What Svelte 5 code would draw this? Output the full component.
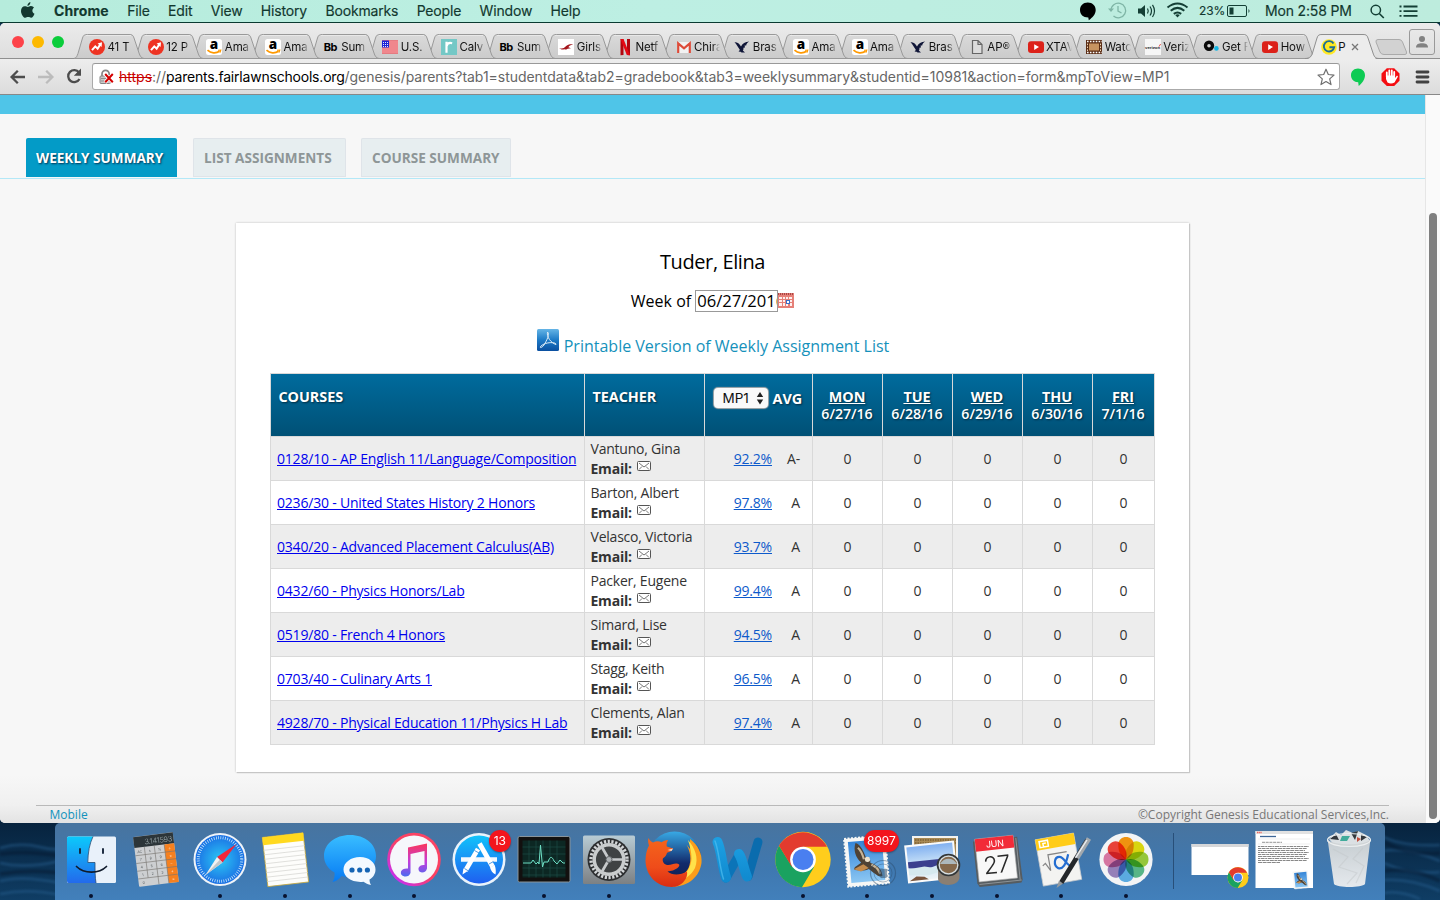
<script>
  const menus = ['File', 'Edit', 'View', 'History', 'Bookmarks', 'People', 'Window', 'Help'];

  const tabs = [
    ['trend', '41 T'], ['trend', '12 P'], ['amazon', 'Ama'], ['amazon', 'Ama'], ['bb', 'Sum'],
    ['flag', 'U.S.'], ['calv', 'Calv'], ['bb', 'Sum'], ['girls', 'Girls'], ['netflix', 'Netf'],
    ['gmail', 'Chira'], ['eagle', 'Bras'], ['amazon', 'Ama'], ['amazon', 'Ama'], ['eagle', 'Bras'],
    ['page', 'AP®'], ['youtube', 'XTAV'], ['film', 'Watc'], ['verizon', 'Veriz'], ['disc', 'Get F'],
    ['youtube', 'How'], ['genesis', 'P']
  ];

  const sections = ['Weekly Summary', 'List Assignments', 'Course Summary'];

  const days = [
    ['MON', '6/27/16'], ['TUE', '6/28/16'], ['WED', '6/29/16'], ['THU', '6/30/16'], ['FRI', '7/1/16']
  ];

  const rows = [
    ['0128/10 - AP English 11/Language/Composition', 'Vantuno, Gina', '92.2%', 'A-'],
    ['0236/30 - United States History 2 Honors', 'Barton, Albert', '97.8%', 'A'],
    ['0340/20 - Advanced Placement Calculus(AB)', 'Velasco, Victoria', '93.7%', 'A'],
    ['0432/60 - Physics Honors/Lab', 'Packer, Eugene', '99.4%', 'A'],
    ['0519/80 - French 4 Honors', 'Simard, Lise', '94.5%', 'A'],
    ['0703/40 - Culinary Arts 1', 'Stagg, Keith', '96.5%', 'A'],
    ['4928/70 - Physical Education 11/Physics H Lab', 'Clements, Alan', '97.4%', 'A']
  ];

  const dock = [
    ['finder', true], ['calculator', false], ['safari', true], ['notes', true], ['messages', true],
    ['itunes', true], ['appstore', false], ['activity', true], ['settings', true], ['firefox', false],
    ['word', false], ['chrome', true], ['mail', true], ['preview', true], ['calendar', true],
    ['grapher', true], ['photos', true]
  ];

  const range = (n) => Array.from({ length: n }, (_, i) => i);
  const petals = ['#fb9a10', '#e3df10', '#9ccf3c', '#5bbd8b', '#5fb2ea', '#9c86c0', '#e07ba8', '#f4453a'];
</script>

{#snippet favicon(kind)}
  <svg class="favicon" viewBox="0 0 16 16" width="16" height="16">
    {#if kind === 'trend'}
      <circle cx="8" cy="8" r="8" fill="#ee3322" />
      <path d="M3 11.2 6.3 7.4 8.6 9.6 11.2 5.6" fill="none" stroke="#fff" stroke-width="2" />
      <path d="M8.6 4.6 13 3.2 12.6 8Z" fill="#fff" />
    {:else if kind === 'amazon'}
      <rect width="16" height="16" rx="2.5" fill="#fff" />
      <text x="8" y="9.6" text-anchor="middle" font-family="Open Sans, sans-serif" font-weight="800" font-size="13.5" fill="#000">a</text>
      <path d="M1.5 11.2C5 14.4 10 14.6 13.6 12.2" fill="none" stroke="#f90" stroke-width="1.7" />
      <path d="M12 11.2 14.8 11 14 13.6" fill="none" stroke="#f90" stroke-width="1.1" />
    {:else if kind === 'flag'}
      <rect y="1.5" width="16" height="13" fill="#fff" />
      {#each range(7) as i}<rect y={1.5 + i * 2} width="16" height="1" fill="#e2101c" />{/each}
      <rect y="1.5" width="7" height="7" fill="#1a22d8" />
      <path d="M1 3.5H7M1 5.5H7M1 7.5H7" stroke="#fff" stroke-width=".9" stroke-dasharray="1 1" />
    {:else if kind === 'calv'}
      <rect width="16" height="16" fill="#74c8c6" />
      <path d="M5.500 2.800V13.800M5.500 7.200C6.200 4.600 8 3.400 11.200 4.200" fill="none" stroke="#fff" stroke-width="2.2" />
    {:else if kind === 'girls'}
      <rect width="16" height="16" fill="#fff" />
      <path d="M1 9C4 10.2 6 9.4 7.6 7.6 9.400 5.600 12 5.2 15 5.4 12.500 6 11 6.8 10.400 8.2L13 9.2 9.6 9.8C8.600 11 7.400 10.4 6.400 10.2 4 11 2.400 10.2 1 9Z" fill="#a4161c" />
    {:else if kind === 'netflix'}
      <path d="M3.5 0H6.5V16L3.5 16.2ZM10 0H13V16.2L10 16Z" fill="#b1060f" />
      <path d="M3.5 0H6.5L13 16.2 9.8 16Z" fill="#e50914" />
    {:else if kind === 'gmail'}
      <rect x="1" y="3" width="14" height="11" rx="1" fill="#f2f2f2" />
      <path d="M2.2 14V4.4L8 9.4 13.8 4.4V14" fill="none" stroke="#dd4b39" stroke-width="2.2" />
    {:else if kind === 'eagle'}
      <path d="M.5 3.2C3 3 5.6 4.4 7 7.6 8.4 4.8 11 2.8 15.4 2.6 13.4 3.6 12.4 5 12.2 6.4L10.6 6.6 11 8.4 9.4 8.8C9.6 10.4 9.4 11 8.8 11.6L11 13.4 7.6 13.6 6 12.6 4.6 13 5.8 10.8C4 8 2.4 5 .5 3.2Z" fill="#101638" />
    {:else if kind === 'page'}
      <path d="M3.5 1.5H9L13 5.5V14.5H3.5ZM9 1.5V5.5H13" fill="#dcdcdc" stroke="#666" stroke-width="1.2" />
    {:else if kind === 'youtube'}
      <rect y="2.3" width="16" height="11.6" rx="3" fill="#dc2119" />
      <path d="M6.2 5.3 11 8.1 6.2 10.9Z" fill="#fff" />
    {:else if kind === 'film'}
      <rect y="1" width="16" height="14" fill="#5a2c14" />
      <rect x="3" y="4.5" width="10" height="7" fill="#c79360" />
      <path d="M1 2.6H16M1 13.4H16" stroke="#fff" stroke-width="1.5" stroke-dasharray="1.6 1.3" />
      <path d="M1.5 4.6V12M14.5 4.6V12" stroke="#f0d6b6" stroke-width="1" stroke-dasharray="1.6 1.3" />
    {:else if kind === 'verizon'}
      <rect width="16" height="16" fill="#f6f6f6" />
      <text x="0" y="10" font-family="Liberation Sans, sans-serif" font-weight="700" font-size="4.3" fill="#222">verizon</text>
      <path d="M14 7.6 15.6 5" stroke="#e2231a" stroke-width=".8" />
    {:else if kind === 'disc'}
      <circle cx="6" cy="6.7" r="3.5" fill="none" stroke="#0a0a0a" stroke-width="3.4" />
      <circle cx="13.4" cy="9.4" r="2.3" fill="#16b7e4" />
    {:else if kind === 'genesis'}
      <circle cx="8" cy="8" r="7.8" fill="#ffe823" />
      <path d="M12.5 4.6A5.200 5.200 0 1 0 13.200 8.2H8.4" fill="none" stroke="#1f6e93" stroke-width="1.900" />
    {/if}
  </svg>
{/snippet}

{#snippet chromeLogo(cx, cy, r)}
  <g transform="translate({cx} {cy}) scale({r / 28})">
    <circle r="28" fill="#ffcd1c" />
    <path d="M-24.2 -14A28 28 0 0 0 -1 28L11.5 7 0 13-11.5 6.5Z" fill="#1aa260" />
    <path d="M-24.2 -14A28 28 0 0 1 24.2 -13L0 -13-11.5 7Z" fill="#e33b2e" />
    <circle r="13" fill="#fff" />
    <circle r="10.6" fill="#4a7ff0" />
  </g>
{/snippet}

{#snippet stamp()}
  <g transform="rotate(-5 32 37)">
    <rect x="11" y="14" width="41" height="48" fill="#f7f7f5" stroke="#f7f7f5" stroke-width="2" stroke-dasharray="2 1.5" />
    <rect x="14.5" y="17.5" width="34" height="41" fill="url(#sky)" />
    <path d="M22 19C26 20 29 26 31 34 34 34 36 37 35 40 40 42 46 46 46 54 42 56 38 50 33 46 29 48 24 47 19 46 17 43 22 42 26 39 21 34 19 26 22 19Z" fill="#4f4234" />
    <path d="M24 24C27 27 28 31 29 36M36 42C40 44 43 48 44 52" stroke="#c8b596" stroke-width="2.2" fill="none" />
    <path d="M18 45 28 41 33 45 25 48Z" fill="#c48b4c" />
    <circle cx="32.5" cy="36.5" r="2.6" fill="#eee3cd" />
  </g>
{/snippet}

{#snippet dockIcon(kind)}
  <svg class="dock-icon" viewBox="0 0 64 77" width="64" height="77">
    {#if kind === 'finder'}
      <rect x="8" y="13.5" width="49" height="46.5" rx="1.5" fill="#e9f1fa" />
      <path d="M9.5 13.5H34C30.5 21 29 29 28.8 39.5H36C36 47 36 54 37 60H9.5Q8 60 8 58V15Q8 13.5 9.5 13.5Z" fill="url(#finderBlue)" />
      <path d="M34 13.5C30.5 21 29 29 28.800 39.500H36C36 47 36 54 37 60" fill="none" stroke="#274b74" stroke-width=".8" />
      <path d="M21 26V30M44 26V30" stroke="#16243a" stroke-width="1.9" stroke-linecap="round" />
      <path d="M17.5 43.5C25 51 40 51 47.5 43.5" fill="none" stroke="#101b2c" stroke-width="1.7" stroke-linecap="round" />
    {:else if kind === 'calculator'}
      <g transform="rotate(-7 32 37)">
        <rect x="12" y="11.5" width="40" height="50" rx="1" fill="#cdcfd1" />
        <rect x="12" y="11.5" width="40" height="11" fill="#2c3539" />
        <text x="50.5" y="20.3" text-anchor="end" font-family="Inter, sans-serif" font-weight="300" font-size="7.600" letter-spacing="-.3" fill="#98a5a8">3.141593</text>
        <rect x="42" y="22.5" width="10" height="39" fill="#f5801f" />
        <path d="M12 30.300H52M12 38.100H52M12 45.900H52M12 53.700H52M22 22.500V53.700M32 22.500V61.500M42 22.500V61.500" stroke="#77746f" stroke-width=".6" />
        <g font-family="Inter, sans-serif" font-size="3.600" fill="#5b6064" text-anchor="middle">
          {#each ['AC', '±', '%', '7', '8', '9', '4', '5', '6', '1', '2', '3', '0'] as key, i}
            <text x={17 + (i % 3) * 10} y={28 + Math.floor(i / 3) * 7.8}>{key}</text>
          {/each}
        </g>
        <g font-family="Inter, sans-serif" font-size="4" fill="#ffe3c8" text-anchor="middle">
          {#each ['÷', '×', '−', '+', '='] as key, i}<text x="47" y={28 + i * 7.8}>{key}</text>{/each}
        </g>
      </g>
    {:else if kind === 'safari'}
      <circle cx="32" cy="36.5" r="26.5" fill="#f0f4f8" />
      <circle cx="32" cy="36.5" r="24.5" fill="url(#safariBlue)" />
      <circle cx="32" cy="36.5" r="21.8" fill="none" stroke="#d9f0ff" stroke-width="3" stroke-dasharray=".7 1.58" />
      <path d="M48.5 21 34.5 39.5 29 34Z" fill="#f3263a" />
      <path d="M17.5 52 29 34 34.5 39.5Z" fill="#f2f2f2" />
      <path d="M17.5 52 31.8 36.8 34.5 39.5Z" fill="#c3c7ca" />
    {:else if kind === 'notes'}
      <g transform="rotate(-6.5 32 37)">
        <rect x="12" y="12" width="41" height="49.5" fill="#fdfdfb" stroke="#c8a93c" stroke-width=".8" />
        <path d="M12 25H53M12 29.5H53M12 34H53M12 38.5H53M12 43H53M12 47.5H53M12 52H53M12 56.5H53" stroke="#dadad6" stroke-width=".8" />
        <rect x="12" y="12" width="41" height="8" fill="#ffd91f" />
      </g>
    {:else if kind === 'messages'}
      <path d="M32 12C47 12 58 21 58 33S47 54 32 54C29 54 26 53.6 23.5 53 21 56 18 58.5 14.5 59 16 56.5 17 53 16.5 49.5 10 46 6 40 6 33 6 21 17 12 32 12Z" fill="url(#msgBlue)" />
      <path d="M42 34C51 34 57.5 39.5 57.5 46.5 57.5 51 55 54.5 51.5 56.5 51.5 58.5 52 60.5 53 62 50 61.5 47.5 60 45.5 58.7 34 60 25.5 54 25.5 46.5 25.5 39.5 33 34 42 34Z" fill="#f3f9ff" />
      <circle cx="34" cy="47" r="2.6" fill="#1464b4" /><circle cx="41.7" cy="47" r="2.6" fill="#1464b4" /><circle cx="49.4" cy="47" r="2.6" fill="#1464b4" />
    {:else if kind === 'itunes'}
      <circle cx="32" cy="36.5" r="26.8" fill="url(#tunes)" />
      <circle cx="32" cy="36.5" r="24" fill="#f6f7fb" />
      <path d="M26 24.5 45 20.5V45.5Q44 49.5 40 49.5 36 49 36.5 45 38 41.5 42.5 42V28L28.5 31V50Q27 54 22.5 53.5 18 52.5 19 48.500 20.500 45 26 45.500Z" fill="url(#note)" />
    {:else if kind === 'appstore'}
      <circle cx="32" cy="36.5" r="26.5" fill="#eaf3fb" />
      <circle cx="32" cy="36.5" r="24" fill="url(#storeBlue)" />
      <path d="M14 36.5H50" stroke="#f3f8fd" stroke-width="4.5" />
      <path d="M31 26 18.5 47.5" stroke="#fff" stroke-width="4.6" />
      <path d="M32.5 20.5 45.5 43.5" stroke="#fff" stroke-width="4.8" />
      <path d="M16.4 45.5 20.7 48 15.5 51.5ZM43 44.5 47.7 42C49 46 49 49 48.5 51.5 45.5 50 44 48 43 44.5Z" fill="#fff" />
      <path d="M27.5 27.5 32 30M42 41 46.5 38.5M17.5 45.5 21.5 48" stroke="#2a82d8" stroke-width=".8" />
    {:else if kind === 'activity'}
      <rect x="6" y="13.5" width="52" height="45.5" rx="1.5" fill="#12100f" stroke="#8a949a" stroke-width="1" />
      <rect x="10.5" y="17.5" width="43" height="37" fill="#0c2723" />
      <path d="M17 17.5V54.5M24 17.5V54.5M31 17.5V54.5M38 17.5V54.5M45 17.5V54.5M10.5 24H53.5M10.5 31H53.5M10.5 38H53.5M10.5 45H53.5M10.5 52H53.5" stroke="#1f5249" stroke-width=".6" />
      <path d="M11 40H19L21 37 24 41 26 39 27 41 28.5 22 30.5 44 32 39H36C38 33 40 33 42 38L45 41 48 37 51 40H53" fill="none" stroke="#6ee0c5" stroke-width="1" />
    {:else if kind === 'settings'}
      <rect x="6" y="12.5" width="52" height="48.5" rx="1.5" fill="url(#steel)" />
      <circle cx="32" cy="36.5" r="21.500" fill="#2d2f31" />
      <circle cx="32" cy="36.5" r="18" fill="none" stroke="#d2d5d7" stroke-width="3.4" stroke-dasharray="2.2 1.57" />
      <circle cx="32" cy="36.5" r="14.800" fill="#3f4244" stroke="#c9cccd" stroke-width="3.5" />
      <path d="M32 36.5 24.500 23.500M32 36.5H47M32 36.5 24.500 49.500" stroke="#c6c9cb" stroke-width="2.700" />
      <circle cx="32" cy="36.5" r="3" fill="#aeb2b5" stroke="#5e6265" />
    {:else if kind === 'firefox'}
      <circle cx="33.5" cy="35" r="26.5" fill="url(#foxBlue)" />
      <path d="M49 16C57 22 61.500 31 60.500 40 58.500 54 47 63.500 33 63.500 22 63.500 15 59 12 53 26 58 42 56 47.500 45 51 36 49 28 45.500 21.500L49 26Z" fill="#fb9d1b" />
      <path d="M47 17C54 25 58 35 54 45 50 53 43 57 36 58 44 53 50 45 50.500 36 50.500 29 49 23 47 17Z" fill="#ffe24a" />
      <path d="M7.500 15C8.500 17 10 18.500 12 19.500 15 18 18 18 20.500 19.300 22 18 24.500 17 27 17 25.800 19.300 25.200 21.500 25.800 23.500L32 25.500C31.500 28 28.500 28.800 26 29.800 25.500 32 24.500 33.500 22 35.200 21 38 22.500 41 26 42 30 42.600 32 40.200 36 40.600 38.500 41 39 42.500 37.500 44 34 47.500 30 48 26.500 48.500 31 52.500 39 52.500 46 48.500 47 54 43 61.500 34 63.800 17 65.500 5 53.500 4.500 38 4.500 31 6 26 8 22.500 7 20 6.800 17 7.500 15Z" fill="url(#foxFire)" />
      <path d="M26.5 27 32 25.500 30.500 28Z" fill="#f7dfc8" />
    {:else if kind === 'word'}
      <g fill="none" stroke-linecap="round">
        <path d="M42 53.500 52 19" stroke="#0a6cae" stroke-width="9" />
        <path d="M20 55 33.500 31" stroke="#0b74b8" stroke-width="9" />
        <path d="M11.5 19C15.500 28 16 43 20 54.500M33 31C37 37 37.500 46 41 53.500" stroke="url(#wordBlue)" stroke-width="10" />
        <path d="M9 18C13 28 13.500 44 17.500 56" stroke="#4fbdf0" stroke-width="1.500" opacity=".7" />
      </g>
    {:else if kind === 'chrome'}
      {@render chromeLogo(32, 36.5, 27.7)}
    {:else if kind === 'mail'}
      {@render stamp()}
      <circle cx="48" cy="50" r="12.5" fill="none" stroke="#2b4a68" stroke-width="1.2" opacity=".45" />
      <circle cx="48" cy="50" r="9" fill="none" stroke="#2b4a68" stroke-width=".8" opacity=".45" />
      <path d="M44 46C47 45 48 46 49 46 52 45 53 47 53 47 51 49 52 52 53 53 51 56 49 55 48 55 45 56 43 52 44 46Z" fill="#2b4a68" opacity=".55" />
    {:else if kind === 'preview'}
      <rect x="13" y="14" width="44" height="33" fill="#a98a55" stroke="#f3f3f0" stroke-width="2" />
      <path d="M15 17H56M15 20H56" stroke="#7d6134" stroke-width="1.5" stroke-dasharray="1.5 1" />
      <g transform="rotate(-6 30 39)">
        <rect x="7" y="21" width="48" height="36" fill="url(#beach)" stroke="#fafafa" stroke-width="2" />
        <path d="M8 37H54V43L40 42 25 46 8 43Z" fill="#3b3f8e" />
        <path d="M8 44 24 43 36 46 54 43V50L42 49 27 52 8 50Z" fill="#d6e9ee" />
        <path d="M8 56 15 52 23 53 27 56Z" fill="#79543b" />
      </g>
      <path d="M38 42V56C39 64 58 64 59.500 55V40Z" fill="#8b7f72" />
      <ellipse cx="48.5" cy="42" rx="11" ry="10.5" fill="#6e746f" stroke="#343739" stroke-width="1.6" />
      <ellipse cx="48.5" cy="42" rx="9.3" ry="8.8" fill="#85694c" stroke="#d8dfe2" stroke-width="1.2" />
      <path d="M40 41C44 34 53 34 57 41Z" fill="#b4c7d0" opacity=".85" />
    {:else if kind === 'calendar'}
      <g transform="rotate(-6 32 37)">
        <path d="M10 16H54.500L55.500 59 54 62H12L10 58Z" fill="#565c60" />
        <path d="M12 59.500H54.500M53 17V59" stroke="#979da1" stroke-width=".8" />
        <rect x="12" y="14" width="38.500" height="43" fill="#f8f8f8" stroke="#aaa" stroke-width=".6" />
        <rect x="12" y="14" width="38.500" height="12.500" fill="#f22b38" />
        <text x="31.5" y="23.800" text-anchor="middle" font-family="Inter, sans-serif" font-size="9" letter-spacing="-.3" fill="#fff">JUN</text>
        <text x="31" y="50" text-anchor="middle" font-family="Inter, sans-serif" font-weight="300" font-size="24" letter-spacing="-.8" fill="#292929">27</text>
      </g>
    {:else if kind === 'grapher'}
      <g transform="rotate(-10 30 37)">
        <rect x="10" y="13" width="39" height="47" fill="#f3f3f1" stroke="#ccc" stroke-width=".7" />
        <rect x="10" y="13" width="39" height="11" fill="#ffcc18" />
        <path d="M13.5 15.5H22V21.5H13.5ZM17 21.5V18H20" fill="none" stroke="#fff" stroke-width="1.5" />
        <path d="M13 40 16 38 20 46V30H39" fill="none" stroke="#858585" stroke-width="1.2" />
        <path d="M40 33C36 43 32 47 28 45 23 41 26 33 31 34 36 35 36 44 42 46" fill="none" stroke="#236dd1" stroke-width="2.2" />
      </g>
      <path d="M58.5 17 32 60" stroke="#24272a" stroke-width="4.800" />
      <path d="M60 15.500 48 35" stroke="#a3a9ae" stroke-width="4.800" />
      <path d="M58 17 46.500 35" stroke="#f1f3f4" stroke-width="1.3" />
      <path d="M30 57.500 34 60.5 27.500 65Z" fill="#959a9e" />
    {:else if kind === 'photos'}
      <circle cx="32" cy="36.5" r="26.6" fill="#f3f4f5" />
      <g class="petals">
        {#each petals as color, i}
          <path d="M32 36.5C24.500 32 24.300 26 24.300 21.500 24.300 11.500 39.700 11.500 39.700 21.500 39.700 26 39.500 32 32 36.5Z" fill={color} transform="rotate({i * 45} 32 36.5)" />
        {/each}
      </g>
    {:else if kind === 'window'}
      <rect x="3.5" y="21" width="57" height="31" fill="#fff" />
      <rect x="3.5" y="21" width="57" height="3" fill="#d6d7d9" />
      {@render chromeLogo(50, 54.5, 10.5)}
    {:else if kind === 'letter'}
      <rect x="3.5" y="8" width="57.5" height="57" fill="#fff" />
      <rect x="3.5" y="8" width="57.5" height="3" fill="#e2e2e2" />
      <path d="M5 9.5H10" stroke="#f06058" stroke-width="1.5" stroke-dasharray="1.2 .5" />
      <path d="M8 13.5H24" stroke="#3e6797" stroke-width="1.3" />
      <path d="M6 16H58M6 21H58" stroke="#ddd" stroke-width=".5" />
      <path d="M10 19.3H30" stroke="#888" stroke-width=".9" stroke-dasharray="3 .7" />
      {#each range(9) as i}
        <path d="M6 {23.5 + i * 2}H{i === 8 ? 28 : 57 - (i % 3) * 2}" stroke="#888" stroke-width="1" stroke-dasharray="{2 + (i % 3)} .6 4 .6" />
      {/each}
      <g transform="translate(37.5 43) scale(.36)">{@render stamp()}</g>
    {:else if kind === 'trash'}
      <path d="M12 16 19 9 24 12 29 7 36 10 41 8 49 12 53 18 45 23H18Z" fill="#dbe0e3" />
      <path d="M13 16 19 11 22 17ZM34 10 41 8 38 17ZM44 11 50 14 44 18Z" fill="#33383d" />
      <path d="M25 13H33L30 18H23Z" fill="#42ac9b" />
      <path d="M40 14 44 16 40 19Z" fill="#c34d3c" />
      <path d="M10.5 16 17 61C20 65 45 65 48 61L53.5 16C50 23 14 23 10.5 16Z" fill="url(#bin)" opacity=".95" />
      <path d="M16 26 31 34 22 44 40 50 30 61M46 25 36 36 47 43 39 60" stroke="#c2c6c8" stroke-width="1.2" fill="none" opacity=".45" />
      <ellipse cx="32" cy="17" rx="21.5" ry="6.5" fill="none" stroke="#eceff0" stroke-width="1.2" />
    {/if}
  </svg>
{/snippet}

<svg class="defs" width="0" height="0" aria-hidden="true">
  <defs>
    <linearGradient id="tabFill" x2="0" y2="1"><stop stop-color="#dadada" /><stop offset="1" stop-color="#cbcbcb" /></linearGradient>
    <linearGradient id="finderBlue" x2="0" y2="1"><stop stop-color="#0cc9fb" /><stop offset="1" stop-color="#236aec" /></linearGradient>
    <radialGradient id="safariBlue"><stop stop-color="#2bc8f5" /><stop offset="1" stop-color="#1b70e4" /></radialGradient>
    <linearGradient id="msgBlue" x2="0" y2="1"><stop stop-color="#39bdff" /><stop offset="1" stop-color="#067af4" /></linearGradient>
    <linearGradient id="tunes" x1="1" x2="0" y1="0" y2="1"><stop offset=".1" stop-color="#fb4566" /><stop offset=".5" stop-color="#fb3f61" /><stop offset=".85" stop-color="#c931e8" /><stop offset="1" stop-color="#a04cf8" /></linearGradient>
    <linearGradient id="note" x2="0" y2="1"><stop stop-color="#fa3659" /><stop offset=".55" stop-color="#c43cdb" /><stop offset="1" stop-color="#4b6cf1" /></linearGradient>
    <linearGradient id="storeBlue" x2="0" y2="1"><stop stop-color="#12c3fa" /><stop offset="1" stop-color="#1f5ff0" /></linearGradient>
    <linearGradient id="steel" x2="0" y2="1"><stop stop-color="#b8cbd4" /><stop offset="1" stop-color="#7c8083" /></linearGradient>
    <linearGradient id="foxBlue" x2="0" y2="1"><stop stop-color="#38a9e5" /><stop offset=".6" stop-color="#122a6b" /><stop offset="1" stop-color="#101d4e" /></linearGradient>
    <linearGradient id="foxFire" x2="0" y2="1"><stop stop-color="#f4651c" /><stop offset=".6" stop-color="#ef4c1a" /><stop offset="1" stop-color="#d92c12" /></linearGradient>
    <linearGradient id="wordBlue" x2="0" y2="1"><stop stop-color="#1c9fe2" /><stop offset="1" stop-color="#118bd0" /></linearGradient>
    <linearGradient id="sky" x2="0" y2="1"><stop stop-color="#3585d7" /><stop offset="1" stop-color="#8cc7f3" /></linearGradient>
    <linearGradient id="beach" x2="0" y2="1"><stop stop-color="#7eaef0" /><stop offset=".5" stop-color="#c6e0f7" /><stop offset="1" stop-color="#f0f5f6" /></linearGradient>
    <linearGradient id="bin" x2="0" y2="1"><stop stop-color="#ccd1d3" /><stop offset="1" stop-color="#eeeff0" /></linearGradient>
    <linearGradient id="pdf" x2="0" y2="1"><stop stop-color="#65b5e6" /><stop offset=".5" stop-color="#1d7ac6" /><stop offset="1" stop-color="#0a4fa0" /></linearGradient>
  </defs>
</svg>

<div class="desktop">
  <header class="menubar">
    <svg class="apple" viewBox="0 0 14 17" width="14" height="17"><path d="M9.400 0C9.500 2 8 3.800 6.500 3.900 6.300 2.200 7.800.300 9.400 0ZM6.900 4.900C7.600 4.900 8.600 4 10 4.100 11.300 4.200 12.300 4.700 13 5.700 10.600 7.100 11 10.700 13.500 11.700 12.800 13.500 11.500 15.800 10.100 15.800 9 15.800 8.600 15.100 7.200 15.100 5.800 15.100 5.400 15.800 4.300 15.800 2.300 15.800 0 12 0 9 0 6 1.800 4.300 3.700 4.300 5.100 4.300 6 4.900 6.900 4.900Z" fill="#12382f" /></svg>
    <nav><b>Chrome</b>{#each menus as m}<span>{m}</span>{/each}</nav>
    <div class="status">
      <svg viewBox="0 0 285 22" width="285" height="22" fill="none" stroke="#143f35">
        <path d="M9.800 2.500C14.500 2.500 17.700 5.800 17.700 10 17.700 14.500 14.500 17.500 10.800 20.200L10.300 17.500C5 17.500 2 14.500 2 10 2 5.800 5 2.500 9.800 2.500Z" fill="#000" stroke="none" />
        <g stroke="#7fb5a6" stroke-width="1.300"><path d="M33 10.500A7.300 7.300 0 1 1 35.500 16" /><path d="M40 6V11L43.500 13" /></g>
        <path d="M30 8.500H36L33 12Z" fill="#7fb5a6" stroke="none" />
        <path d="M60 8.500H63L67 5V17L63 13.500H60Z" fill="#143f35" stroke="none" />
        <path d="M69.500 8.500Q71 11 69.500 13.500M72 6.500Q75 11 72 15.500M74.500 4.800Q78.500 11 74.500 17" stroke-width="1.200" />
        <g stroke-width="2"><path d="M89.500 7.500Q99.500 -.500 109.500 7.500M92.700 10.800Q99.500 5 106.300 10.800M95.800 13.900Q99.500 11 103.200 13.900" /></g>
        <path d="M97.200 15Q99.500 13.500 101.800 15L99.500 17.600Z" fill="#143f35" stroke="none" />
        <rect x="149.500" y="5.500" width="19" height="11" rx="1.500" />
        <rect x="151.500" y="7.500" width="4" height="7" fill="#143f35" stroke="none" />
        <path d="M170.500 9Q172.500 11 170.500 13Z" fill="#143f35" stroke="none" />
      </svg>
      <span class="battery">23%</span>
      <span class="clock">Mon 2:58 PM</span>
      <svg class="tools" viewBox="0 0 50 22" width="50" height="22" fill="none" stroke="#143f35"><circle cx="5.800" cy="10" r="4.700" stroke-width="1.500" /><path d="M9.300 13.500 13.800 18" stroke-width="1.700" /><path d="M33.500 6.500H47.500M33.500 11.200H47.500M33.500 15.800H47.500" stroke-width="1.800" /><path d="M29.500 6.500H31.500M29.500 11.200H31.500M29.500 15.800H31.500" stroke-width="1.800" /></svg>
    </div>
  </header>

  <main class="window">
    <div class="tabstrip">
      <div class="lights"><i></i><i></i><i></i></div>
      <div class="tabs">
        {#each tabs as [icon, title], i}
          <div class="tab" class:active={i === 21} style:z-index={i === 21 ? 40 : 30 - i}>
            <svg class="shape" viewBox="0 0 74 26" width="74" height="26">
              {#if i === 21}
                <path d="M-2 25.500C3 25 4.500 23 5.500 20L10 4C11 1 12 .500 15 .500H56C59 .500 60 1 61 4L66 20C67 23 68 25.500 72 25.500V26H-2Z" fill="#ececec" />
                <path d="M-2 24.500C3 24.500 4.500 22 5.500 19L10 4C11 1 12 .500 15 .500H56C59 .500 60 1 61 4L66 19C67 22 68 24.500 72 24.500" fill="none" stroke="#8f8f8f" />
              {:else}
                <path d="M-1 24.500C1.500 24 2 22 3 19.500L7.500 4C8.500 1 9.500 .500 12.500 .500H54C57 .500 58 1 59 4L64 19C65 22 66 24 69 24.500Z" fill="url(#tabFill)" stroke="#999" />
                <path d="M11 1.500H56" stroke="#e8e8e8" />
              {/if}
            </svg>
            {#if icon === 'bb'}<b class="bb">Bb</b>{:else}{@render favicon(icon)}{/if}
            <span class="title">{title}</span>
            {#if i === 21}<svg class="close" viewBox="0 0 8 8" width="8" height="8"><path d="M1 1 7 7M7 1 1 7" stroke="#777" stroke-width="1.300" /></svg>{/if}
          </div>
        {/each}
      </div>
      <svg class="newtab" viewBox="0 0 34 16" width="34" height="16"><path d="M3 .500H24Q26.500.500 27.500 3L31.500 13Q32 15.500 30 15.500H9Q6 15.500 5 13L1 3Q.500.500 3 .500Z" fill="#d2d2d2" stroke="#aaa" /></svg>
      <div class="profile"><svg viewBox="0 0 14 14" width="14" height="14"><circle cx="7" cy="4" r="3" fill="#828282" /><path d="M1 12.500C1 9 3.500 8.200 7 8.200S13 9 13 12.500Z" fill="#828282" /></svg></div>
    </div>

    <div class="toolbar">
      <svg class="navs" viewBox="0 0 76 22" width="76" height="22" fill="none" stroke-width="2.300">
        <path d="M17 11H4M9.800 4.800 3.600 11 9.800 17.200" stroke="#4d4d4d" />
        <path d="M30 11H43M38.200 4.800 44.400 11 38.200 17.200" stroke="#bcbcbc" />
        <path d="M71 6.500A6 6 0 1 0 71.500 13" stroke="#4d4d4d" />
        <path d="M73 2.500V9.700H65.800Z" fill="#4d4d4d" stroke="none" />
      </svg>
      <div class="omnibox">
        <svg class="lock" viewBox="0 0 16 16" width="16" height="16"><path d="M3 7.500V5A3.600 3.600 0 0 1 10.200 5V7.500" fill="none" stroke="#858585" stroke-width="1.700" /><rect x="1" y="7" width="10.500" height="7.500" rx="1" fill="#c9c9c9" stroke="#858585" /><path d="M2 9.500H11M2 12H11" stroke="#909090" /><path d="M6 5 14 13.500M14 5 6 13.500" stroke="#fff" stroke-width="3.600" /><path d="M6.200 5 13.800 13.200M13.800 5 6.200 13.200" stroke="#d40000" stroke-width="2" /></svg>
        <span class="url"><s>https</s>://<b>parents.fairlawnschools.org</b>/genesis/parents?tab1=studentdata&amp;tab2=gradebook&amp;tab3=weeklysummary&amp;studentid=10981&amp;action=form&amp;mpToView=MP1</span>
        <svg class="star" viewBox="0 0 18 18" width="18" height="18"><path d="M9 1.200 11.300 6.500 17 7.100 12.700 10.900 14 16.600 9 13.600 4 16.600 5.300 10.900 1 7.100 6.700 6.500Z" fill="#fff" stroke="#6f6f6f" stroke-width="1.200" stroke-linejoin="round" /></svg>
      </div>
      <svg class="ext" viewBox="0 0 86 22" width="86" height="22">
        <path d="M8 2.500C12 2.500 15 5.300 15 9.200 15 13.500 12 17 8.700 20L8.200 16.200C4 16.200 1 13 1 9.200 1 5.300 4 2.500 8 2.500Z" fill="#0ecb54" />
        <path d="M36.800 2.300H44.200L49.500 7.500V14.700L44.200 20H36.800L31.500 14.700V7.500Z" fill="#f40d12" />
        <path d="M36.800 11V6.500M39.300 10V4.500M41.800 10V4.500M44.200 11V6" stroke="#fff" stroke-width="1.800" stroke-linecap="round" />
        <path d="M36 9.500H45V12L47 9.500 48 10.500 44.500 16.500Q41 18.500 37.500 16.500L36 13Z" fill="#fff" />
        <path d="M67 6H78M67 11H78M67 16H78" stroke="#424242" stroke-width="2.800" stroke-linecap="round" />
      </svg>
    </div>

    <div class="viewport">
      <div class="page">
        <div class="band"></div>
        <nav class="sections">
          {#each sections as s, i}<a class:current={i === 0}>{s}</a>{/each}
        </nav>
        <section class="card">
          <h1>Tuder, Elina</h1>
          <div class="week">
            <span>Week of</span><div class="date">06/27/2016</div>
            <svg viewBox="0 0 16 16" width="16" height="16"><rect y="0" width="16" height="15" fill="#e58078" /><path d="M0 1H16" stroke="#a94543" stroke-dasharray="1 1" stroke-width="2" /><path d="M1 4H4V6H1ZM5 4H7V6H5ZM8 4H10V6H8ZM11 4H14V6H11ZM1 7H4V9H1ZM5 7H7V9H5ZM12 7H14V9H12ZM1 10H4V13H1ZM5 10H7V13H5ZM8 11H10V13H8ZM12 10H14V13H12Z" fill="#fff0ee" /><rect x="8.500" y="7.500" width="3" height="3" fill="#fff" stroke="#3970ca" /></svg>
          </div>
          <a class="print">
            <svg viewBox="0 0 22 22" width="22" height="22"><rect width="22" height="22" rx="1.500" fill="url(#pdf)" /><path d="M10.500 3C9.500 8 14 14 19 15.500 19.500 13 9 12.500 4 17 2 19 4.500 19.500 7 16 10 11 13 5 10.500 3Z" fill="none" stroke="#dcecf8" stroke-width="1" /></svg>
            <span>Printable Version of Weekly Assignment List</span>
          </a>
          <table>
            <colgroup><col class="c-course" /><col class="c-teacher" /><col class="c-avg" />{#each range(4) as _}<col class="c-day" />{/each}<col class="c-fri" /></colgroup>
            <thead>
              <tr>
                <th>COURSES</th><th>TEACHER</th>
                <th class="avg"><div><span class="select">MP1<svg viewBox="0 0 8 13" width="8" height="13"><path d="M4 0 7.200 5H.800ZM4 12.500 7.200 7.500H.800Z" fill="#222" /></svg></span>AVG</div></th>
                {#each days as [d, date]}<th class="day"><u>{d}</u><br /><span>{date}</span></th>{/each}
              </tr>
            </thead>
            <tbody>
              {#each rows as [course, teacher, pct, grade]}
                <tr>
                  <td><a class="course">{course}</a></td>
                  <td class="teacher">{teacher}<br /><b>Email:</b><svg viewBox="0 0 14 10" width="14" height="10"><rect x=".500" y=".500" width="13" height="9" rx="1" fill="#fff" stroke="#555" /><path d="M2 2 7 6 12 2M2 8.500 5 5.500M12 8.500 9 5.500" fill="none" stroke="#666" stroke-width=".9" /></svg></td>
                  <td><div class="score"><a>{pct}</a><span>{grade}</span></div></td>
                  {#each days as _}<td class="zero">0</td>{/each}
                </tr>
              {/each}
            </tbody>
          </table>
        </section>
        <footer><a>Mobile</a><span>©Copyright Genesis Educational Services,Inc.</span></footer>
      </div>
      <div class="scroll"><div class="thumb"></div></div>
    </div>
  </main>

  <div class="shore">
    <svg class="sea" viewBox="0 0 1440 77" width="1440" height="77" preserveAspectRatio="none">
      <g fill="none" stroke="#2a6596" stroke-width="3" opacity=".4"><path d="M0 25Q20 19 40 24T70 23M0 40Q25 46 60 38M0 58Q22 52 60 60M0 71Q28 65 60 72" /><path d="M1380 12Q1400 24 1440 22M1384 28Q1405 24 1440 38M1384 40Q1410 52 1440 49M1384 57Q1410 55 1440 68M1384 70Q1400 67 1420 76" /></g>
      <g fill="none" stroke="#04162c" stroke-width="4" opacity=".45"><path d="M0 31Q25 27 60 33M0 51Q30 46 60 50M1385 20Q1410 33 1440 30M1385 48Q1410 44 1440 58" /></g>
    </svg>
    <div class="dock">
      {#each dock as [kind, running]}
        <div class="app" class:running>
          {@render dockIcon(kind)}
          {#if kind === 'appstore'}<span class="badge">13</span>{/if}
          {#if kind === 'mail'}<span class="badge wide">8997</span>{/if}
        </div>
      {/each}
      <div class="divider"></div>
      {#each ['window', 'letter', 'trash'] as kind}<div class="app">{@render dockIcon(kind)}</div>{/each}
    </div>
  </div>
</div>

<style>
  :global(body) { margin: 0; overflow: hidden; }
  .desktop { width: 1440px; height: 900px; display: flex; flex-direction: column; overflow: hidden; background: #0d2f4d; font-family: Inter, sans-serif; }
  .defs { position: absolute; }
  svg { flex: none; overflow: visible; }

  .menubar { height: 22px; flex: none; display: flex; align-items: center; background: linear-gradient(90deg, #b6ecdc, #bdefe3 45%, #bdecdd); border-bottom: 1px solid #0b3a31; color: #12382f; font-size: 14px; }
  .apple { margin: -2px 0 0 21px; }
  nav { display: flex; }
  .menubar nav { gap: 18.4px; margin: -2px 0 0 19px; }
  .menubar span, .menubar b { letter-spacing: -.17px; white-space: nowrap; -webkit-text-stroke: .15px; }
  .menubar b { letter-spacing: .1px; }
  .status { margin-left: auto; width: 362px; display: flex; position: relative; align-items: center; height: 22px; }
  .status > svg:first-child { width: 285px; margin-right: -98px; }
  .battery { position: absolute; left: 121px; top: 3px; font-size: 12px; }
  .clock { width: 105px; margin-top: -2px; }

  .window { flex: none; height: 800px; display: flex; flex-direction: column; overflow: hidden; border-radius: 5px; background: #f7f7f7; position: relative; z-index: 2; }
  .tabstrip { height: 36px; flex: none; display: flex; background: linear-gradient(#ebebeb, #dedede); border-bottom: 1px solid #8f8f8f; box-sizing: border-box; }
  .lights { display: flex; gap: 8px; padding: 13px 0 0 12px; width: 63px; flex: none; }
  .lights i { width: 12px; height: 12px; border-radius: 50%; background: #fd4249; }
  .lights i:nth-child(2) { background: #fdb900; }
  .lights i:nth-child(3) { background: #0bcd3b; }
  .tabs { display: flex; flex: none; padding-top: 11px; }
  .tab { width: 58.66px; height: 24px; display: flex; align-items: center; position: relative; padding-left: 14px; box-sizing: border-box; }
  .shape { position: absolute; left: 0; top: 0; }
  .favicon { position: relative; top: 1px; }
  .bb { position: relative; top: 1px; font-size: 11px; width: 15px; letter-spacing: -.5px; white-space: nowrap; flex: none; }
  .title { position: relative; top: 1px; margin-left: 2.5px; width: 26px; flex: none; font-size: 11.5px; letter-spacing: -.1px; color: #111; white-space: nowrap; overflow: hidden; -webkit-mask-image: linear-gradient(90deg, #000 70%, transparent); mask-image: linear-gradient(90deg, #000 70%, transparent); }
  .active .title { width: 9px; margin-left: 1.5px; -webkit-mask-image: none; mask-image: none; }
  .close { position: relative; top: 1px; margin-left: 4px; }
  .newtab { margin: 16px 0 0 10px; }
  .profile { width: 24px; height: 24px; border: 1px solid #999; border-radius: 3px; margin: 6px 0 0 0; display: flex; align-items: center; justify-content: center; flex: none; }

  .toolbar { height: 36px; flex: none; display: flex; align-items: center; background: linear-gradient(#ededed, #dcdcdc); border-bottom: 1px solid #888; box-sizing: border-box; }
  .navs { margin-left: 8px; }
  .omnibox { width: 1246px; height: 25px; margin-left: 8px; display: flex; align-items: center; background: #fff; border: 1px solid #aaa; border-top-color: #999; border-radius: 3px; flex: none; }
  .lock { margin-left: 6px; }
  .url { margin-left: 4px; font-size: 14px; color: #666; white-space: nowrap; letter-spacing: -.037px; }
  .url b { color: #000; font-weight: 400; letter-spacing: -.2px; }
  .url s { color: #c90000; letter-spacing: 0; }
  .star { margin: 0 4px 0 auto; }
  .ext { margin-left: 10px; }

  .viewport { flex: 1; min-height: 0; display: flex; overflow: hidden; font-family: 'Open Sans', sans-serif; }
  .page { width: 1425px; display: flex; flex-direction: column; background: linear-gradient(#f7f7f7 680px, #f0f0f0 710px, #e3e3e3); }
  .band { height: 19px; flex: none; background: #4fc5e8; }
  .sections { padding: 24px 0 0 26px; height: 40px; border-bottom: 1px solid #b3e8f7; }
  .sections a { height: 39px; line-height: 40px; box-sizing: border-box; padding-left: 11px; margin-right: 15px; width: 150px; font-size: 13.6px; font-weight: 700; text-transform: uppercase; color: #8e9697; background: #e7eef0; box-shadow: inset 0 0 0 1px #dfe4e9; border-radius: 2px 2px 0 0; white-space: nowrap; }
  .sections a:nth-child(2) { width: 153px; }
  .sections a.current { width: 151px; margin-right: 16px; padding-left: 10px; color: #fff; background: #039bc7; box-shadow: none; text-shadow: 1px 1px 2px #035; }
  .card { width: 953px; height: 549px; margin: 44px 0 0 236px; background: #fff; box-shadow: 0 0 2px #bbb, 1px 1px 1px #ccc; color: #000; display: flex; flex-direction: column; align-items: center; flex: none; }
  h1 { margin: 25px 0 0; font-size: 20px; letter-spacing: -.4px; line-height: 28px; font-weight: 400; }
  .week { display: flex; align-items: center; margin-top: 14px; height: 22px; font-size: 16px; }
  .week svg { margin-top: -1px; }
  .date { width: 80px; height: 20px; line-height: 20px; padding-left: 1px; margin-left: 4px; border: 1px solid #999; overflow: hidden; white-space: nowrap; font-size: 16.6px; }
  .print { display: flex; margin: 17px 0 0 1px; height: 44px; color: #1591bb; font-size: 16px; }
  .print span { margin: 6px 0 0 5px; line-height: 22px; }
  table { width: 885px; table-layout: fixed; border-collapse: collapse; color: #333; font-size: 14px; letter-spacing: -.2px; }
  .c-course { width: 314px; } .c-teacher { width: 120px; } .c-avg { width: 108px; } .c-day { width: 70px; } .c-fri { width: 62px; }
  thead tr { height: 63px; background: linear-gradient(#006b9d, #005075); }
  th, td { border: 1px solid #d9d9d9; padding: 0 6px; text-align: left; }
  th { color: #fff; padding: 14px 8px 0 7.500px; vertical-align: top; font-size: 14.400px; line-height: 17px; letter-spacing: -.05px; text-shadow: 1px 1px 2px #012b40; }
  th.day { padding: 14px 1px 0 0; text-align: center; }
  th.day span { font-weight: 600; font-size: 14.2px; }
  th.avg div { display: flex; align-items: center; gap: 5px; height: 20px; padding-left: 1px; }
  .select { width: 54px; height: 20px; box-sizing: border-box; display: flex; align-items: center; justify-content: space-between; padding: 0 4px 0 9px; border-radius: 4px; background: #fafafa; box-shadow: 0 0 1px 1px #aaa; color: #111; font-family: Inter, sans-serif; font-weight: 400; font-size: 13.500px; text-shadow: none; }
  tbody tr { height: 44px; }
  tbody tr:nth-child(odd) { background: #ededed; }
  .course { color: #00e; text-decoration: underline; white-space: nowrap; }
  .teacher { line-height: 20px; letter-spacing: -.22px; white-space: nowrap; padding: 1px 0 0 5.500px; }
  .teacher svg { margin-left: 5px; position: relative; top: -3px; }
  .score { display: flex; justify-content: flex-end; padding-right: 6px; }
  .score a { color: #0d5acb; text-decoration: underline; }
  .score span { width: 28px; text-align: right; }
  .zero { text-align: center; padding: 0; }
  footer { width: 1353px; margin: 33px 0 0 36px; border-top: 1px solid #b9b9b9; display: flex; justify-content: space-between; font-size: 12px; line-height: 17px; color: #777; }
  footer a { color: #1292bc; margin-left: 13.5px; }
  .scroll { width: 15px; background: #fafafa; border-left: 1px solid #e6e6e6; box-sizing: border-box; padding: 118px 0 0 3px; }
  .thumb { width: 8px; height: 606px; border-radius: 4px; background: #7f7f7f; }

  .shore { height: 77px; flex: none; position: relative; background: linear-gradient(#07233e, #0f3d64); }
  .shore::before { content: ''; position: absolute; top: -8px; left: 0; right: 0; height: 8px; background: #07233e; }
  .sea { position: absolute; inset: 0; filter: blur(1.2px); }
  .dock { position: relative; z-index: 3; width: 1330px; height: 77px; margin-left: 55px; padding-left: 4px; box-sizing: border-box; display: flex; background: linear-gradient(#48749f, #3f78b0 60%, #4280bb); border-radius: 5px 5px 0 0; }
  .app { width: 64.7px; height: 77px; position: relative; flex: none; }
  .petals path { mix-blend-mode: multiply; }
  .running::after { content: ''; position: absolute; left: 30px; top: 71px; width: 4px; height: 4px; border-radius: 50%; background: #08122f; }
  .badge { position: absolute; right: 1px; top: 7px; min-width: 22px; height: 22px; line-height: 22px; border-radius: 11px; background: #f3151c; color: #fff; text-align: center; font-size: 12px; box-shadow: 0 1px 2px #0005; }
  .badge.wide { right: 1px; min-width: 35px; }
  .divider { width: 29px; height: 56px; margin-top: 10px; flex: none; background: linear-gradient(90deg, transparent 14px, #284f79 14px 15px, transparent 15px); }
</style>
